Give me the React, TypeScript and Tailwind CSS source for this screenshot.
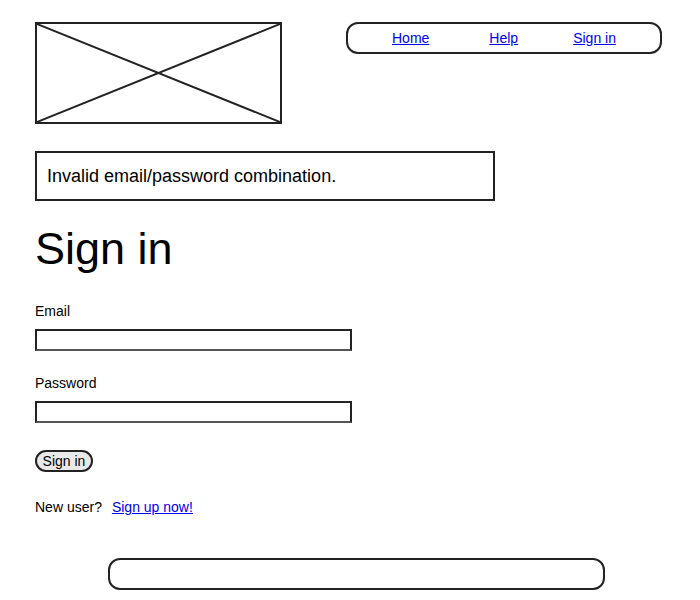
import type { JSX } from "react";

function Logo(): JSX.Element {
  return (
    <div className="h-[102px] w-[247px] border-2 border-[#222]">
      <svg width="100%" height="100%" viewBox="0 0 243 98" preserveAspectRatio="none">
        <line x1="0" y1="0" x2="243" y2="98" stroke="#222" strokeWidth="2" />
        <line x1="243" y1="0" x2="0" y2="98" stroke="#222" strokeWidth="2" />
      </svg>
    </div>
  );
}

export default function App(): JSX.Element {
  return (
    <div className="min-h-[600px] bg-white pl-[35px] pr-[38px] pt-[22px] font-['Liberation_Sans',Arial,sans-serif] text-black">
      <header className="flex items-start justify-between">
        <Logo />
        <nav className="flex h-[32px] w-[316px] items-center rounded-[12px] border-2 border-[#222] pl-[44px] text-[14px]">
          <a href="#" className="text-[#0000ee] underline">
            Home
          </a>
          <a href="#" className="ml-[60px] text-[#0000ee] underline">
            Help
          </a>
          <a href="#" className="ml-[55px] text-[#0000ee] underline">
            Sign in
          </a>
        </nav>
      </header>

      <div className="mt-[27px] flex h-[50px] w-[460px] items-center border-2 border-[#222] pl-[10px] text-[18px]">
        Invalid email/password combination.
      </div>

      <h1 className="mt-[26px] text-[45px] leading-[44px]">Sign in</h1>

      <form className="mt-[32px] flex flex-col text-[14px] leading-[16px]">
        <label>Email</label>
        <input
          type="email"
          className="mt-[10px] h-[22px] w-[317px] border-2 border-[#222] border-b-[#555] outline-none"
        />
        <label className="mt-[24px]">Password</label>
        <input
          type="password"
          className="mt-[10px] h-[22px] w-[317px] border-2 border-[#222] border-b-[#555] outline-none"
        />
        <button
          type="button"
          className="mt-[27px] flex h-[22px] w-[58px] items-center justify-center rounded-full border-2 border-[#222] bg-[#e9e9e9] text-[14px]"
        >
          Sign in
        </button>
      </form>

      <p className="mt-[27px] text-[14px] leading-[16px]">
        New user?
        <a href="#" className="ml-[10px] text-[#0000ee] underline">
          Sign up now!
        </a>
      </p>

      <footer className="ml-[73px] mt-[43px] h-[32px] w-[497px] rounded-[12px] border-2 border-[#222]" />
    </div>
  );
}
